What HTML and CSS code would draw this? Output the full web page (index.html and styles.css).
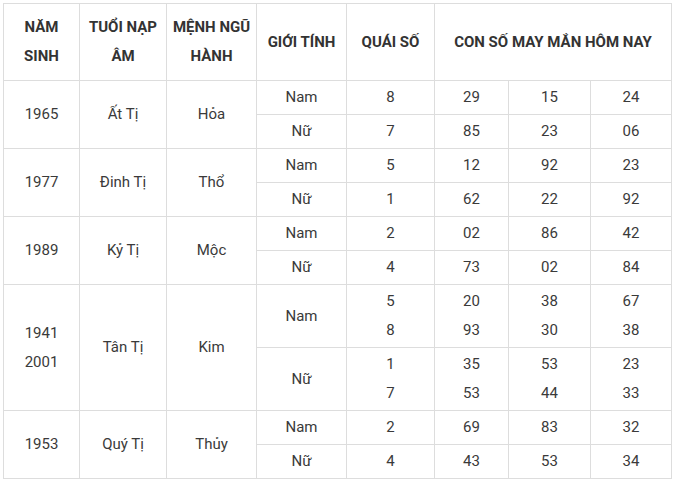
FILE: index.html
```html
<!DOCTYPE html>
<html lang="vi">
<head>
<meta charset="utf-8">
<title>Con số may mắn tuổi Tị</title>
<link rel="stylesheet" href="styles.css">
</head>
<body>
<table class="lucky">
  <colgroup>
    <col class="c1"><col class="c2"><col class="c3"><col class="c4"><col class="c5"><col class="c6"><col class="c7"><col class="c8">
  </colgroup>
  <thead>
    <tr>
      <th>NĂM<br>SINH</th>
      <th>TUỔI NẠP<br>ÂM</th>
      <th>MỆNH NGŨ<br>HÀNH</th>
      <th>GIỚI TÍNH</th>
      <th>QUÁI SỐ</th>
      <th colspan="3">CON SỐ MAY MẮN HÔM NAY</th>
    </tr>
  </thead>
  <tbody>
    <tr>
      <td rowspan="2">1965</td><td rowspan="2">Ất Tị</td><td rowspan="2">Hỏa</td>
      <td>Nam</td><td>8</td><td>29</td><td>15</td><td>24</td>
    </tr>
    <tr>
      <td>Nữ</td><td>7</td><td>85</td><td>23</td><td>06</td>
    </tr>
    <tr>
      <td rowspan="2">1977</td><td rowspan="2">Đinh Tị</td><td rowspan="2">Thổ</td>
      <td>Nam</td><td>5</td><td>12</td><td>92</td><td>23</td>
    </tr>
    <tr>
      <td>Nữ</td><td>1</td><td>62</td><td>22</td><td>92</td>
    </tr>
    <tr>
      <td rowspan="2">1989</td><td rowspan="2">Kỷ Tị</td><td rowspan="2">Mộc</td>
      <td>Nam</td><td>2</td><td>02</td><td>86</td><td>42</td>
    </tr>
    <tr>
      <td>Nữ</td><td>4</td><td>73</td><td>02</td><td>84</td>
    </tr>
    <tr>
      <td rowspan="2">1941<br>2001</td><td rowspan="2">Tân Tị</td><td rowspan="2">Kim</td>
      <td>Nam</td><td>5<br>8</td><td>20<br>93</td><td>38<br>30</td><td>67<br>38</td>
    </tr>
    <tr>
      <td>Nữ</td><td>1<br>7</td><td>35<br>53</td><td>53<br>44</td><td>23<br>33</td>
    </tr>
    <tr>
      <td rowspan="2">1953</td><td rowspan="2">Quý Tị</td><td rowspan="2">Thủy</td>
      <td>Nam</td><td>2</td><td>69</td><td>83</td><td>32</td>
    </tr>
    <tr>
      <td>Nữ</td><td>4</td><td>43</td><td>53</td><td>34</td>
    </tr>
  </tbody>
</table>
</body>
</html>
```

FILE: styles.css
```css
html, body {
  margin: 0;
  padding: 0;
  background: #ffffff;
}

body {
  padding: 3px;
  font-family: Roboto, "Liberation Sans", Arial, sans-serif;
  color: #333333;
}

.lucky {
  border-collapse: collapse;
  table-layout: fixed;
  width: 669px;
}

.c1 { width: 76px; }
.c2 { width: 87px; }
.c3 { width: 90px; }
.c4 { width: 90px; }
.c5 { width: 88px; }
.c6 { width: 74px; }
.c7 { width: 82px; }
.c8 { width: 81px; }

.lucky th,
.lucky td {
  border: 1px solid #dddddd;
  text-align: center;
  vertical-align: middle;
  padding: 2px 2px;
  font-size: 15px;
  line-height: 29px;
}

.lucky th {
  font-weight: 700;
  color: #333333;
  padding: 9px 2px 9px;
}

.lucky td {
  font-weight: 400;
  color: #3a3a3a;
}
```
